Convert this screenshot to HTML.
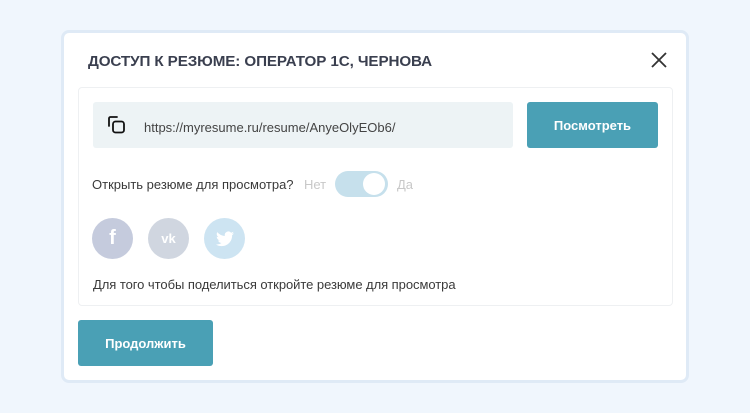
<!DOCTYPE html>
<html><head><meta charset="utf-8"><style>
*{box-sizing:border-box;margin:0;padding:0}
body{width:750px;height:413px;background:#f0f6fd;font-family:"Liberation Sans","DejaVu Sans",sans-serif;position:relative;overflow:hidden}
.modal{position:absolute;left:61px;top:30px;width:628px;height:353px;background:#fff;border:3px solid #dfeaf6;border-radius:8px}
.abs{position:absolute}
h1{position:absolute;left:88px;top:53px;font-size:15.2px;font-weight:bold;color:#3a3f4f;letter-spacing:-0.1px}
.panel{left:78px;top:87px;width:595px;height:219px;border:1px solid #eef0f2;border-radius:4px}
.url{left:93px;top:102px;width:420px;height:46px;background:#edf3f5;border-radius:3px}
.btn{background:#4aa0b5;color:#fff;font-weight:bold;font-size:13px;border-radius:3px;display:flex;align-items:center;justify-content:center}
.t{font-size:13px;color:#3a3a3a}
.c{width:41px;height:41px;border-radius:50%;display:flex;align-items:center;justify-content:center;color:#fff;font-weight:bold}
</style></head><body>
<div class="modal"></div>
<h1>ДОСТУП К РЕЗЮМЕ: ОПЕРАТОР 1С, ЧЕРНОВА</h1>
<svg class="abs" style="left:650px;top:51px" width="18" height="18" viewBox="0 0 18 18"><path d="M2 2L16 16M16 2L2 16" stroke="#333" stroke-width="1.8"/></svg>
<div class="abs panel"></div>
<div class="abs url"></div>
<svg class="abs" style="left:106px;top:115px" width="20" height="20" viewBox="0 0 20 20"><path d="M3 11V3.5A1.5 1.5 0 0 1 4.5 2H11" fill="none" stroke="#111" stroke-width="1.8" stroke-linecap="round"/><rect x="7" y="6.5" width="11" height="11" rx="2.5" fill="none" stroke="#111" stroke-width="1.8"/></svg>
<div class="abs t" style="left:144px;top:120px;color:#444">https://myresume.ru/resume/AnyeOlyEOb6/</div>
<div class="abs btn" style="left:527px;top:102px;width:131px;height:46px">Посмотреть</div>
<div class="abs t" style="left:92px;top:177px">Открыть резюме для просмотра?</div>
<div class="abs t" style="left:304px;top:177px;color:#c8c8c8">Нет</div>
<div class="abs" style="left:335px;top:171px;width:53px;height:26px;border-radius:13px;background:#c6e0ec"></div>
<div class="abs" style="left:363px;top:173px;width:22px;height:22px;border-radius:50%;background:#fff"></div>
<div class="abs t" style="left:397px;top:177px;color:#c8c8c8">Да</div>
<div class="abs c" style="left:92px;top:218px;background:#c5cbdd;font-size:20px">f</div>
<div class="abs c" style="left:148px;top:218px;background:#d0d6e0;font-size:13px">vk</div>
<div class="abs c" style="left:204px;top:218px;background:#cde4f2"><svg width="18" height="16" viewBox="0 0 24 20"><path fill="#fff" d="M24 2.4a10 10 0 0 1-2.8.8A5 5 0 0 0 23.3.4a10 10 0 0 1-3.1 1.2A4.9 4.9 0 0 0 11.8 6 14 14 0 0 1 1.7.9a4.9 4.9 0 0 0 1.5 6.6A4.9 4.9 0 0 1 1 6.9a4.9 4.9 0 0 0 3.9 4.9 5 5 0 0 1-2.2.1 4.9 4.9 0 0 0 4.6 3.4A9.9 9.9 0 0 1 0 17.3 14 14 0 0 0 7.5 19.5c9 0 14-7.5 14-14v-.6A10 10 0 0 0 24 2.4z"/></svg></div>
<div class="abs t" style="left:93px;top:277px;letter-spacing:-0.05px">Для того чтобы поделиться откройте резюме для просмотра</div>
<div class="abs btn" style="left:78px;top:320px;width:135px;height:46px">Продолжить</div>
</body></html>
